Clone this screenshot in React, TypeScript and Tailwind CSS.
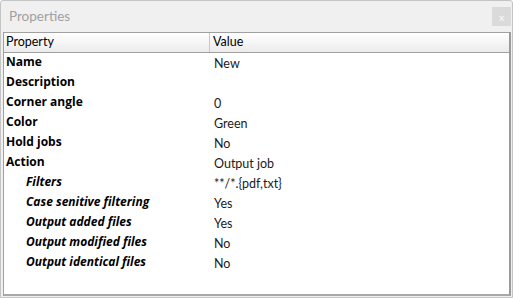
const rows: { label: string; value: string; sub?: boolean }[] = [
  { label: "Name", value: "New" },
  { label: "Description", value: "" },
  { label: "Corner angle", value: "0" },
  { label: "Color", value: "Green" },
  { label: "Hold jobs", value: "No" },
  { label: "Action", value: "Output job" },
  { label: "Filters", value: "**/*.{pdf,txt}", sub: true },
  { label: "Case senitive filtering", value: "Yes", sub: true },
  { label: "Output added files", value: "Yes", sub: true },
  { label: "Output modified files", value: "No", sub: true },
  { label: "Output identical files", value: "No", sub: true },
]

export default function App() {
  return (
    <div className="w-[513px] h-[298px] bg-white" style={{ fontFamily: "Lato, 'Open Sans', sans-serif" }}>
      <div className="h-full flex flex-col rounded-t-[3px] border border-[#c4c4c4] bg-[#f0f0f0]">
        {/* title bar */}
        <div className="h-[31px] flex items-center justify-between pl-[8px] pr-[1px]">
          <span className="text-[13.5px] text-[#a0a0a0]">Properties</span>
          <div className="w-[19px] h-[19px] bg-[#dadada] flex items-center justify-center text-[10px] leading-none text-[#f4f4f4] font-bold">
            x
          </div>
        </div>
        {/* table */}
        <div className="flex-1 ml-[2px] mr-[1px] mb-[1px] border border-[#a0a0a0] border-r-[#9a9a9a] border-b-[#a8a8a8] border-r-2 border-b-2 bg-white text-[12.5px] text-black">
          <div className="h-[20px] flex bg-gradient-to-b from-[#ffffff] to-[#ebebeb] border-b border-[#a0a0a0]">
            <div className="w-[206px] pl-[2px] flex items-center border-r border-[#c8c8c8]">Property</div>
            <div className="flex-1 pl-[3px] flex items-center">Value</div>
          </div>
          {rows.map((r) => (
            <div key={r.label} className="h-[20px] flex">
              <div
                className={
                  "w-[206px] font-['Open_Sans'] text-[12px] font-bold leading-[17px] " +
                  (r.sub ? "pl-[22px] italic" : "pl-[2px]")
                }
              >
                {r.label}
              </div>
              <div className="flex-1 pl-[4px] pt-[1px] leading-[20px] text-[#1a1a1a]">{r.value}</div>
            </div>
          ))}
        </div>
      </div>
    </div>
  )
}
